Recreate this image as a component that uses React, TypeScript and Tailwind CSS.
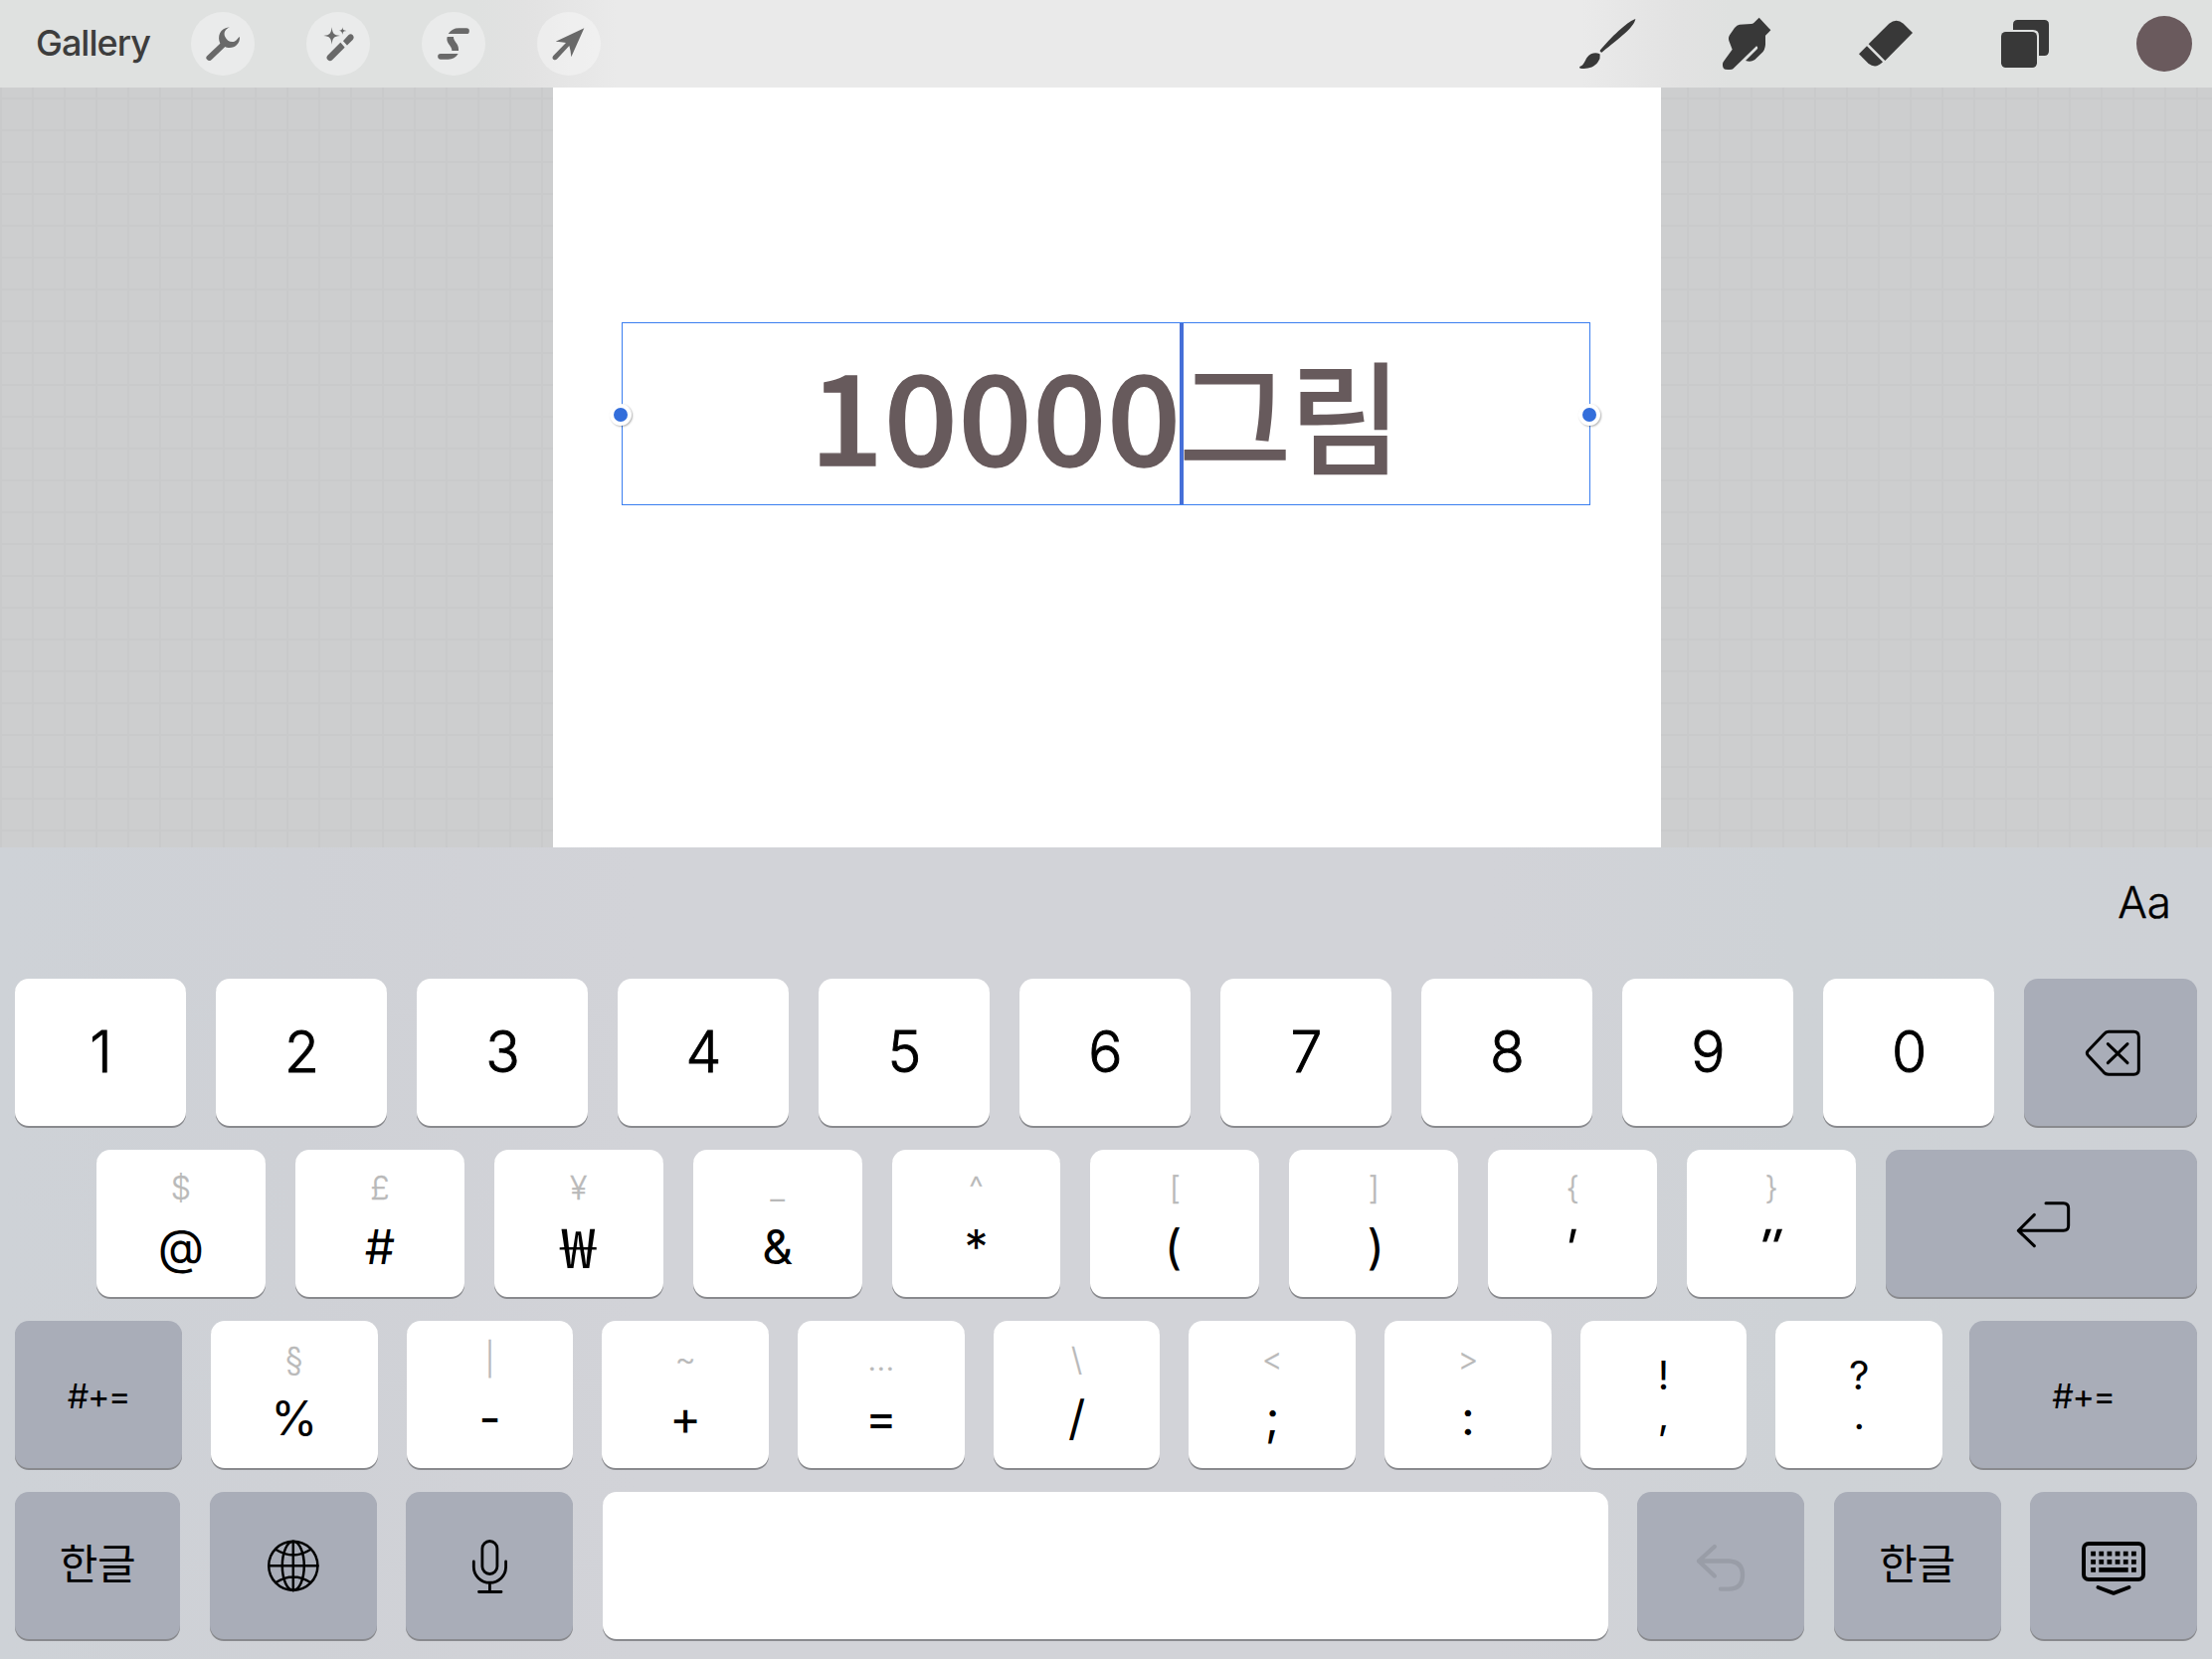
import React from "react";
import clsx from "clsx";

type Tone = "light" | "dark";

function Key({ tone = "light", className, children }: { tone?: Tone; className?: string; children?: React.ReactNode }) {
  return (
    <div
      className={clsx(
        "h-[148px] rounded-[14px] shadow-[0_2px_0_#898a8e] text-black",
        tone === "light" ? "bg-white" : "bg-[#a9adb8]",
        className,
      )}
    >
      {children}
    </div>
  );
}

function DigitKey({ label }: { label: string }) {
  return (
    <Key className="flex w-[172px] shrink-0 items-center justify-center">
      <span className="pb-px pl-px text-[57px] font-light leading-none [-webkit-text-stroke:0.9px_#000000]">{label}</span>
    </Key>
  );
}

function DualKey({ top, bottom, glyph = "text-[48px]" }: { top: string; bottom: string; glyph?: string }) {
  return (
    <Key className="flex flex-1 flex-col items-center pt-[19px]">
      <span className="text-[32px] font-light leading-[40px] text-[#b9b9b9] [-webkit-text-stroke:0.3px_#b9b9b9]">{top}</span>
      <span className={clsx("mt-[9px] inline-block leading-[60px]", glyph)}>{bottom}</span>
    </Key>
  );
}

function PunctuationKey({ top, bottom }: { top: string; bottom: string }) {
  return (
    <Key className="flex flex-1 flex-col items-center pt-[35px] text-[40px] leading-[40px]">
      <span>{top}</span>
      <span>{bottom}</span>
    </Key>
  );
}

function TextKey({ label, className }: { label: string; className?: string }) {
  return (
    <Key tone="dark" className={clsx("flex shrink-0 items-center justify-center", className)}>
      {label}
    </Key>
  );
}

function IconKey({
  viewBox,
  className,
  color = "#000000",
  children,
}: {
  viewBox: string;
  className?: string;
  color?: string;
  children: React.ReactNode;
}) {
  return (
    <Key tone="dark" className={clsx("shrink-0", className)}>
      <svg viewBox={viewBox} className="block h-full w-full" fill="none" stroke={color} strokeLinecap="round" strokeLinejoin="round">
        {children}
      </svg>
    </Key>
  );
}

function ToolButton({ viewBox, children }: { viewBox: string; children: React.ReactNode }) {
  return (
    <div className="h-16 w-16 rounded-full bg-white/35">
      <svg viewBox={viewBox} className="block h-full w-full" fill="#696969">
        {children}
      </svg>
    </div>
  );
}

function PaintTool({ viewBox, children }: { viewBox: string; children: React.ReactNode }) {
  return (
    <svg viewBox={viewBox} className="block h-14 w-14 overflow-visible" fill="#383838">
      {children}
    </svg>
  );
}

function Header() {
  return (
    <header className="flex h-[88px] items-center bg-[linear-gradient(90deg,#dfe1e0_0px,#dfe1e0_480px,#e2e2e2_530px,#eaeaea_620px,#eaeaea_1590px,#e2e2e2_1690px,#dfe1e0_1740px)] pl-9 pr-5">
      <div className="w-[156px] pb-[2px] text-[36px] font-medium leading-none tracking-[-1px] text-[#3d3d3d]">Gallery</div>
      <div className="flex gap-[52px]">
        <ToolButton viewBox="516 36 192 192">
          <path d="M566 167L604 131C595 112 602 84 633 82C620 87 613 99 619 111C624 122 635 129 647 125C656 121 658 113 663 111C664 130 651 144 632 144C626 144 622 143 619 141L579 179C575 184 568 184 565 180C560 176 561 171 566 167Z" />
        </ToolButton>
        <ToolButton viewBox="864 36 192 192">
          <path d="M941 82C943 101 946 106 966 108C946 110 943 115 941 134C938 115 936 110 916 108C936 106 938 101 941 82Z" />
          <path d="M973 82C974 90 976 92 985 93C976 94 974 96 973 105C972 96 970 94 962 93C970 92 972 90 973 82Z" />
          <path d="M968 129L979 142Q980 143 979 144L943 180Q936 187 929 181Q922 174 928 167L966 129Q967 128 968 129Z" />
          <path d="M976 122L991 106Q998 100 1004 106Q1010 113 1004 120L988 136Q987 137 986 136L975 124Q975 123 976 122Z" />
        </ToolButton>
        <ToolButton viewBox="1212 36 192 192">
          <path d="M1292 102C1300 91 1310 85 1324 85H1347A8.5 8.5 0 0 1 1347 102Z" />
          <path d="M1289 111H1308C1307 125 1323 130 1323 148V153H1303C1304 139 1288 134 1288 117Z" />
          <path d="M1322 162C1315 173 1305 179 1292 179H1269A8.5 8.5 0 0 1 1269 162Z" />
        </ToolButton>
        <ToolButton viewBox="1620 36 192 192">
          <path d="M1762 85L1676 125Q1692 126 1707 129L1669 168Q1664 175 1669 179Q1675 183 1681 177L1717 138Q1722 154 1723 172Z" />
        </ToolButton>
      </div>
      <div className="ml-auto flex gap-[84px]">
        <PaintTool viewBox="54 48 168 168">
          <path d="M223 57C205 62 160 100 117 151Q114 154 118 157Q121 160 124 156C172 117 220 82 223 57Z" />
          <path d="M114 162C103 157 86 160 77 173C70 183 68 196 55 201Q52 204 57 206C75 209 98 205 110 187Q118 176 116 165Q116 163 114 162Z" />
        </PaintTool>
        <PaintTool viewBox="474 48 168 168">
          <path d="M596 53L631 91L615 107V134Q614 150 604 160L583 180Q571 189 555 183L591 147Q593 142 588 139L517 208Q514 211 494 209Q485 206 486 192Q487 187 490 184L515 149L505 123Q502 114 507 106L522 84Q529 75 537 74L572 72Q577 72 580 69Z" />
        </PaintTool>
        <PaintTool viewBox="894 48 168 168">
          <path d="M926 133L988 71Q1010 54 1031 71L1059 99L976 183Z" />
          <path d="M897 163L921 139L969 187Q948 209 926 192Z" />
        </PaintTool>
        <PaintTool viewBox="1314 48 168 168">
          <path d="M1362 90V74Q1362 60 1376 60H1456Q1470 60 1470 74V154Q1470 168 1456 168H1440V108Q1440 90 1422 90Z" />
          <rect x="1326" y="96" width="108" height="108" rx="14" />
        </PaintTool>
        <div className="h-14 w-14 rounded-full bg-[#6a5a5d]" />
      </div>
    </header>
  );
}

function Handle({ className }: { className: string }) {
  return (
    <div
      className={clsx(
        "absolute top-[81px] flex h-[22px] w-[22px] items-center justify-center rounded-full bg-white shadow-[1px_1px_2px_rgba(0,0,0,0.3)]",
        className,
      )}
    >
      <div className="h-[14px] w-[14px] rounded-full bg-[#336edb]" />
    </div>
  );
}

function Workspace() {
  return (
    <main className="flex h-[764px] justify-center bg-[#cdcecf] bg-[linear-gradient(90deg,#c9cacb_2px,transparent_2px),linear-gradient(180deg,#c9cacb_2px,transparent_2px)] bg-[length:32px_32px] bg-[position:0px_10px]">
      <div className="ml-[2px] h-full w-[1114px] bg-white pt-[236px]">
        <div className="relative ml-[69px] h-[184px] w-[974px] border border-[#3b7ff0]">
          <div className="flex h-full whitespace-nowrap pl-[188px] font-['Noto_Sans_CJK_KR'] text-[125px] font-medium leading-[177px] text-[#675a5c]">
            <span className="w-[371px] origin-left scale-x-[1.04] tracking-[0.6px] [-webkit-text-stroke:1.4px_#675a5c]">10000</span>
            <span className="pt-px text-[123.5px] tracking-[-2.5px]">그림</span>
          </div>
          <div className="absolute left-[560px] top-0 h-full w-[4px] bg-[#466fd8]" />
          <Handle className="left-[-13px]" />
          <Handle className="right-[-11px]" />
        </div>
      </div>
    </main>
  );
}

const hangul = "font-['Noto_Sans_CJK_KR'] text-[42px] leading-none pb-[8px] tracking-[-0.5px]";
const shiftLabel = "text-[34px] leading-none tracking-[-1.3px] pt-[3px]";

function Keyboard() {
  return (
    <section className="h-[816px] bg-[linear-gradient(90deg,#ced2d7_0px,#cfd1d6_300px,#d2d3d8_640px,#d2d3d8_1500px,#ced2d6_1800px,#ced1d6_2224px)] px-[15px]">
      <div className="flex h-[132px] items-start justify-end pr-[26px] pt-[29px]">
        <span className="text-[44px] font-light leading-[52px] text-black [-webkit-text-stroke:0.4px_#000000]">Aa</span>
      </div>
      <div className="flex flex-col gap-6">
        <div className="flex gap-[30px]">
          {["1", "2", "3", "4", "5", "6", "7", "8", "9", "0"].map((d) => (
            <DigitKey key={d} label={d} />
          ))}
          <IconKey className="w-[174px]" viewBox="765 432 522 444">
            <path strokeWidth="9" d="M1020 592H1096Q1111 592 1111 607V706Q1111 721 1096 721H1020Q1011 720 1006 715L957 662Q953 656 957 651L1006 599Q1012 592 1020 592Z" />
            <path strokeWidth="9" d="M1018 629L1077 686M1077 629L1018 686" />
          </IconKey>
        </div>
        <div className="flex gap-[30px] pl-[82px]">
          <DualKey top="$" bottom="@" />
          <DualKey top="£" bottom="#" />
          <DualKey top="¥" bottom="₩" glyph="font-['Noto_Sans_CJK_KR'] text-[55px] scale-x-[1.15] -translate-y-[3px]" />
          <DualKey top="_" bottom="&" />
          <DualKey top="^" bottom="*" />
          <DualKey top="[" bottom="(" glyph="text-[48px] -translate-x-[2px]" />
          <DualKey top="]" bottom=")" glyph="text-[48px] translate-x-[2px]" />
          <DualKey top="{" bottom="'" glyph="text-[50px] -translate-x-[3px] -skew-x-12" />
          <DualKey top="}" bottom={'"'} glyph="text-[50px] -translate-x-[3px] -skew-x-12 scale-x-[1.5] font-light" />
          <IconKey className="w-[313px]" viewBox="348 948 939 444">
            <path strokeWidth="9" d="M831 1109H884Q899 1109 899 1124V1177Q899 1192 884 1192H749M796 1144L748 1192L796 1238" />
          </IconKey>
        </div>
        <div className="flex">
          <TextKey label="#+=" className={clsx("w-[168px]", shiftLabel)} />
          <div className="ml-[29px] mr-[27px] flex flex-1 gap-[29px]">
            <DualKey top="§" bottom="%" />
            <DualKey top="|" bottom="-" />
            <DualKey top="~" bottom="+" />
            <DualKey top="…" bottom="=" />
            <DualKey top="\" bottom="/" />
            <DualKey top="<" bottom=";" />
            <DualKey top=">" bottom=":" />
            <PunctuationKey top="!" bottom="," />
            <PunctuationKey top="?" bottom="." />
          </div>
          <TextKey label="#+=" className={clsx("w-[229px]", shiftLabel)} />
        </div>
        <div className="flex gap-[29.5px]">
          <TextKey label="한글" className={clsx("w-[166px]", hangul)} />
          <IconKey className="w-[168px]" viewBox="210.5 1500 168 148">
            <g strokeWidth="2.5">
              <circle cx="294.3" cy="1574.3" r="24.6" />
              <ellipse cx="294.3" cy="1574.3" rx="11" ry="24.6" />
              <path d="M294.3 1550V1599M270 1574.3H319M277 1558Q294.3 1569 311.6 1558M277 1591Q294.3 1580 311.6 1591" />
            </g>
          </IconKey>
          <IconKey className="w-[168px]" viewBox="408 1500 168 148">
            <g strokeWidth="2.8">
              <rect x="484.9" y="1549.5" width="15" height="33" rx="7.5" />
              <path d="M476.3 1570V1575.5A16.1 15.7 0 0 0 508.6 1575.5V1570M492.4 1591.5V1600.5M481.5 1600.5H504" />
            </g>
          </IconKey>
          <Key className="flex-1" />
          <IconKey className="w-[168px]" color="#999da7" viewBox="1646 1500 168 148">
            <path strokeWidth="4.4" d="M1723.8 1555L1708 1569.5L1723.8 1584.5M1708 1569.5H1738Q1752 1570 1752 1583.5Q1752 1597.6 1738 1597.6H1730" />
          </IconKey>
          <TextKey label="한글" className={clsx("w-[168px]", hangul)} />
          <IconKey className="w-[168px]" viewBox="2041 1500 168 148">
            <rect x="2095" y="1552" width="60" height="36" rx="5" strokeWidth="4" />
            <path strokeWidth="4.8" strokeLinecap="butt" strokeDasharray="4.8 3.36" d="M2102.2 1562.2H2148M2102.2 1570.3H2148" />
            <path strokeWidth="4.8" strokeLinecap="butt" d="M2102.2 1578.4H2107M2110.3 1578.4H2139.7M2143 1578.4H2147.8" />
            <path strokeWidth="4" d="M2109.5 1596L2125 1601.8L2140.5 1596" />
          </IconKey>
        </div>
      </div>
    </section>
  );
}

export default function App() {
  return (
    <div className="h-[1668px] w-[2224px] overflow-hidden font-['Inter','Noto_Sans_CJK_KR',sans-serif]">
      <Header />
      <Workspace />
      <Keyboard />
    </div>
  );
}
